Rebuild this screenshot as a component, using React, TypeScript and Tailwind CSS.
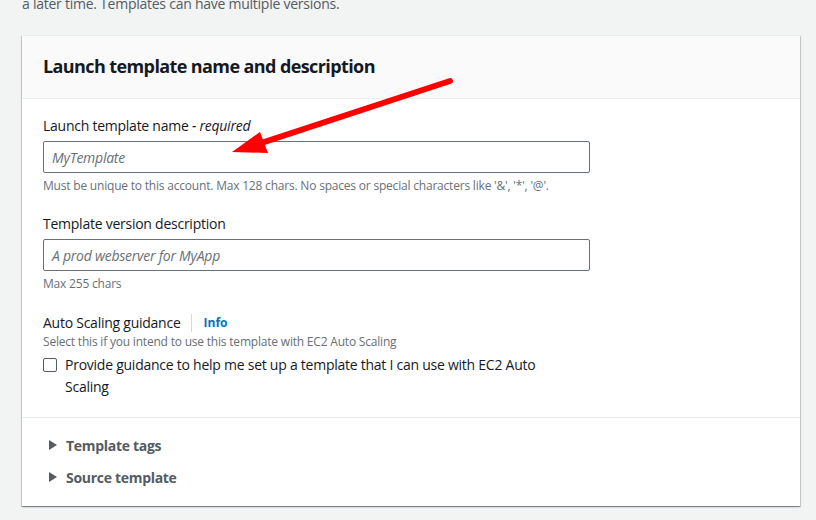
import React from 'react';

const font = { fontFamily: '"Open Sans", "Liberation Sans", sans-serif' };

function Field({ label, req, placeholder, hint }: { label: string; req?: boolean; placeholder: string; hint: string }) {
  return (
    <div className="w-[547px]">
      <div className="text-[14px] leading-[22px] tracking-[-0.25px] text-[#16191f]">
        {label}
        {req && <span className="italic"> - required</span>}
      </div>
      <div className="mt-[4px] h-[32px] border border-[#687078] rounded-[2px] px-[8px] flex items-center text-[14px] tracking-[-0.25px] italic text-[#687078]">
        {placeholder}
      </div>
      <div className="mt-[4px] text-[12px] leading-[18px] tracking-[-0.2px] text-[#687078]">{hint}</div>
    </div>
  );
}

function Expander({ title }: { title: string }) {
  return (
    <div className="flex items-center gap-[9px] h-[32px]">
      <svg width="8" height="10" viewBox="0 0 8 10" className="ml-[6px]">
        <path d="M0 0 L8 5 L0 10 Z" fill="#545b64" />
      </svg>
      <span className="text-[14px] font-bold tracking-[-0.3px] text-[#545b64]">{title}</span>
    </div>
  );
}

export default function App() {
  return (
    <div className="relative w-[816px] h-[520px] bg-[#f2f3f3] overflow-hidden" style={font}>
      <div className="absolute -top-[7px] left-[22px] text-[14px] leading-[22px] tracking-[-0.25px] text-[#545b64]">
        a later time. Templates can have multiple versions.
      </div>

      <div className="pt-[35px] pl-[22px] pr-[16px]">
        <section className="bg-white shadow-[0_1px_1px_0_rgba(0,28,36,0.3),1px_1px_1px_0_rgba(0,28,36,0.15),-1px_1px_1px_0_rgba(0,28,36,0.15)] border-t border-[#eaeded]">
          <header className="h-[63px] bg-[#fafafa] border-b border-[#eaeded] flex items-center px-[21px] pb-[3px]">
            <h2 className="text-[18px] font-bold tracking-[-0.6px] text-[#16191f] leading-[22px]">
              Launch template name and description
            </h2>
          </header>

          <div className="px-[21px] pt-[16px] pb-[19px] flex flex-col gap-[18px]">
            <Field
              label="Launch template name"
              req
              placeholder="MyTemplate"
              hint={"Must be unique to this account. Max 128 chars. No spaces or special characters like '&', '*', '@'."}
            />
            <Field label="Template version description" placeholder="A prod webserver for MyApp" hint="Max 255 chars" />

            <div className="w-[547px] mt-[1px]">
              <div className="flex items-center text-[14px] leading-[22px] tracking-[-0.25px] text-[#16191f]">
                <span>Auto Scaling guidance</span>
                <span className="ml-[10px] mr-[12px] h-[18px] border-l border-[#d5dbdb]" />
                <span className="text-[12px] font-bold tracking-normal text-[#0073bb]">Info</span>
              </div>
              <div className="text-[12px] leading-[16px] tracking-[-0.2px] text-[#687078]">
                Select this if you intend to use this template with EC2 Auto Scaling
              </div>
              <label className="mt-[4px] flex items-start gap-[8px]">
                <span className="mt-[4px] w-[14px] h-[14px] border border-[#545b64] rounded-[2px] shrink-0 bg-white" />
                <span className="text-[14px] leading-[22px] tracking-[-0.25px] text-[#16191f]">
                  Provide guidance to help me set up a template that I can use with EC2 Auto
                  <br />
                  Scaling
                </span>
              </label>
            </div>
          </div>

          <div className="border-t border-[#eaeded] px-[21px] pt-[11px] pb-[13px]">
            <Expander title="Template tags" />
            <Expander title="Source template" />
          </div>
        </section>
      </div>

      <svg className="absolute left-0 top-0 pointer-events-none" width="816" height="520">
        <line x1="450" y1="81" x2="252" y2="146" stroke="#f00" strokeWidth="6" strokeLinecap="round" />
        <path d="M232 152 L260 132 L268 153 Z" fill="#f00" />
      </svg>
    </div>
  );
}
